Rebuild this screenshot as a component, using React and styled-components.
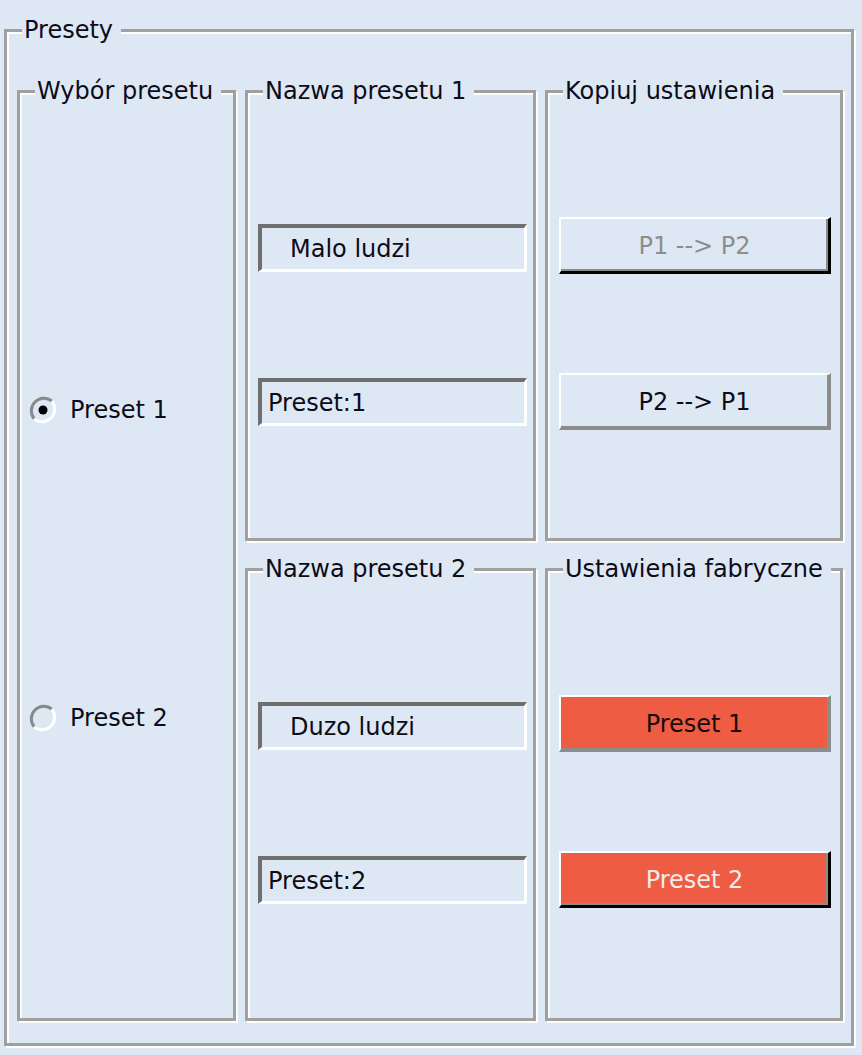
import styled, { createGlobalStyle } from "styled-components"

const Global = createGlobalStyle`
  html, body {
    margin: 0;
    background: #dee8f4;
  }
  body {
    font-family: "DejaVu Sans", Verdana, sans-serif;
    font-size: 24px;
    color: #0c0c18;
  }
`

const Page = styled.div`
  padding: 17px 0 0 4px;
  width: 862px;
  height: 1055px;
  box-sizing: border-box;
`

const Group = styled.fieldset`
  margin: 0;
  padding: 0;
  min-width: 0;
  box-sizing: border-box;
  border: 3px solid #a0a0a0;
  box-shadow: inset 2px 2px 0 #fff, 2px 2px 0 #fff;
`

const Outer = styled(Group)`
  width: 850px;
`

const Legend = styled.legend`
  margin-left: 15px;
  padding: 0 8px 0 2px;
  line-height: 26px;
  white-space: nowrap;
  background: #dee8f4;
`

const Grid = styled.div`
  display: grid;
  grid-template-columns: 219px 291px 298px;
  grid-template-rows: 463px 465px;
  column-gap: 9px;
  row-gap: 15px;
  padding: 35px 8px 22px 10px;
`

const Column = styled(Group)`
  grid-row: 1 / span 2;
`

const Body = styled.div`
  display: flex;
  flex-direction: column;
  align-items: flex-start;
  gap: ${p => p.$gap}px;
  padding: ${p => p.$top}px 0 0 ${p => p.$left}px;
`

const RadioRow = styled.label`
  display: flex;
  align-items: center;
  gap: 12px;
  height: 30px;
  line-height: 30px;
`

const Field = styled.div`
  display: flex;
  align-items: center;
  box-sizing: border-box;
  width: 269px;
  height: 48px;
  padding-left: ${p => p.$indent}px;
  border-style: solid;
  border-width: 4px 3px 3px 4px;
  border-color: #6f6f6f #fff #fff #6f6f6f;
`

const Button = styled.button`
  box-sizing: border-box;
  width: 272px;
  height: 57px;
  margin: 0;
  padding: 2px 0 0;
  font-family: inherit;
  font-size: 24px;
  color: ${p => p.$ink};
  background: ${p => (p.$red ? "#ee5d43" : "#dee8f4")};
  border-style: solid;
  border-width: 2px 3px 3px 2px;
  border-color: ${p =>
    p.$default ? "#fff #000 #000 #fff" : "#fff #8c8c8c #8c8c8c #fff"};
  box-shadow: ${p => (p.$default ? "inset -2px -2px 0 #8c8c8c" : "inset -1px -1px 0 #8c8c8c")};
`

function Radio({ checked }) {
  return (
    <svg width="30" height="30" viewBox="0 0 30 30">
      <path d="M6.2 23.8 A12.5 12.5 0 0 1 23.8 6.2" fill="none" stroke="#8a8a8a" strokeWidth="3" />
      <path d="M23.8 6.2 A12.5 12.5 0 0 1 6.2 23.8" fill="none" stroke="#fff" strokeWidth="3" />
      {checked && <circle cx="15" cy="15" r="4.5" fill="#000" />}
    </svg>
  )
}

export default function App() {
  return (
    <Page>
      <Global />
      <Outer>
        <Legend>Presety</Legend>
        <Grid>
          <Column>
            <Legend>Wybór presetu</Legend>
            <Body $top={291} $left={8} $gap={278}>
              <RadioRow>
                <Radio checked />
                Preset 1
              </RadioRow>
              <RadioRow>
                <Radio />
                Preset 2
              </RadioRow>
            </Body>
          </Column>

          <Group>
            <Legend>Nazwa presetu 1</Legend>
            <Body $top={120} $left={10} $gap={106}>
              <Field $indent={28}>Malo ludzi</Field>
              <Field $indent={6}>Preset:1</Field>
            </Body>
          </Group>

          <Group>
            <Legend>Kopiuj ustawienia</Legend>
            <Body $top={113} $left={11} $gap={99}>
              <Button $default $ink="#8d8d8d">P1 --&gt; P2</Button>
              <Button $ink="#0c0c18">P2 --&gt; P1</Button>
            </Body>
          </Group>

          <Group>
            <Legend>Nazwa presetu 2</Legend>
            <Body $top={120} $left={10} $gap={106}>
              <Field $indent={28}>Duzo ludzi</Field>
              <Field $indent={6}>Preset:2</Field>
            </Body>
          </Group>

          <Group>
            <Legend>Ustawienia fabryczne</Legend>
            <Body $top={113} $left={11} $gap={99}>
              <Button $red $ink="#1a0a0a">Preset 1</Button>
              <Button $red $default $ink="#f3ecec">Preset 2</Button>
            </Body>
          </Group>
        </Grid>
      </Outer>
    </Page>
  )
}
